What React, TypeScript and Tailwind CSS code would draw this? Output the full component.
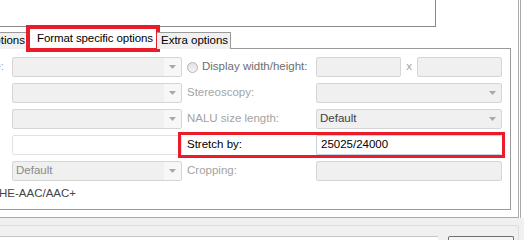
import { ReactNode } from "react";

function Arrow() {
    return (
        <svg width="7" height="4" viewBox="0 0 7 4" className="shrink-0">
            <path d="M0 0 H7 L3.5 4 Z" fill="#a8a8a8" />
        </svg>
    );
}

function Combo({ text = "", dark = false, split = false, width = "w-[170px]" }: { text?: string; dark?: boolean; split?: boolean; width?: string }) {
    return (
        <div className={`${width} h-[20px] flex border border-[#d6d6d6] rounded-[2px] bg-[#f0f0f0] overflow-hidden`}>
            <div className={`flex-1 flex items-center pl-[3px] ${dark ? "text-[#404040]" : "text-[#8a8a8a]"}`}>
                {text}
            </div>
            <div className={`w-[17px] flex items-center justify-center ${split ? "bg-[#f7f7f7]" : ""}`}>
                <Arrow />
            </div>
        </div>
    );
}

function Input({ value = "", disabled = false, width = "w-[186px]", border = "border-[#d6d6d6]" }: { value?: string; disabled?: boolean; width?: string; border?: string }) {
    return (
        <div className={`${width} h-[20px] flex items-center pl-[4px] border ${border} rounded-[2px] ${disabled ? "bg-[#f0f0f0]" : "bg-white"} text-black`}>
            {value}
        </div>
    );
}

function Row({ left, label, right }: { left: ReactNode; label: ReactNode; right: ReactNode }) {
    return (
        <div className="flex items-center h-[20px]">
            <div className="w-[12px]" />
            {left}
            <div className="w-[134px] pl-[5px] flex items-center whitespace-nowrap text-[#a3a3a3]">{label}</div>
            {right}
        </div>
    );
}

export default function App() {
    return (
        <div className="w-[524px] h-[240px] bg-white overflow-hidden text-[11.5px] leading-none" style={{ fontFamily: '"Liberation Sans", Arial, sans-serif' }}>
            <div className="w-[521px] h-[218px] border-r-[3px] border-double border-[#a9a9a9]">
                <div className="w-[519px] h-[218px] border-b border-[#a9a9a9]">
                    {/* preview box */}
                    <div className="w-[436px] h-[27px] border-r border-b border-[#8a8a8a]" />

                    {/* tabs */}
                    <div className="flex items-end h-[21px] mt-[1px] relative z-10">
                        <div className="w-[30px] h-[17px] flex justify-end overflow-hidden">
                            <div className="shrink-0 h-full flex items-center pl-[5px] pr-[4px] whitespace-nowrap bg-[#f0f0f0] border border-b-0 border-[#9a9a9a] text-black">
                                Video options
                            </div>
                        </div>
                        <div className="h-[21px] w-[128px] flex items-center pl-[7px] bg-white border border-b-0 border-[#9a9a9a] text-black whitespace-nowrap tracking-[-0.1px] outline-[4px] outline-solid outline-[#ea1c2a] outline-offset-[-1px] -ml-px">
                            Format specific options
                        </div>
                        <div className="h-[17px] w-[74px] flex items-center pl-[4px] bg-[#f0f0f0] border border-b-0 border-l-0 border-[#9a9a9a] text-black whitespace-nowrap">
                            Extra options
                        </div>
                    </div>

                    {/* panel */}
                    <div className="w-[511px] h-[162px] -mt-px border-t border-r border-b border-[#9a9a9a] pt-[8px] flex flex-col gap-[6px]">
                        <div className="flex items-center h-[20px]">
                            <div className="w-[12px] h-full flex items-center justify-end overflow-hidden">
                                <span className="whitespace-nowrap shrink-0 text-[#a3a3a3] pr-[8px]">Profile:</span>
                            </div>
                            <Combo split />
                            <div className="w-[134px] pl-[5px] flex items-center gap-[4px] whitespace-nowrap text-[#6e6e6e]">
                                <span className="w-[11px] h-[11px] rounded-full border border-[#b5b5b5] bg-gradient-to-b from-[#e2e2e2] to-[#f4f4f4]" />
                                Display width/height:
                            </div>
                            <Input disabled width="w-[85px]" />
                            <div className="w-[16px] text-center text-[#a3a3a3]">x</div>
                            <Input disabled width="w-[85px]" />
                        </div>
                        <Row left={<Combo split />} label="Stereoscopy:" right={<Combo width="w-[186px]" />} />
                        <Row left={<Combo split />} label="NALU size length:" right={<Combo width="w-[186px]" text="Default" dark />} />
                        <div className="flex items-center h-[20px]">
                            <div className="w-[12px]" />
                            <Input width="w-[170px]" border="border-[#e2e2e2]" />
                            <div className="flex items-center outline-[3px] outline-solid outline-[#ea1c2a] ml-[-1px]">
                                <div className="w-[135px] pl-[6px] whitespace-nowrap text-black">Stretch by:</div>
                                <Input value="25025/24000" border="border-[#c9d3de] border-r-0" />
                            </div>
                        </div>
                        <Row left={<Combo split text="Default" />} label="Cropping:" right={<Input disabled />} />
                        <div className="-ml-[1px] mt-[1px] text-[#454545] whitespace-nowrap h-[12px] flex items-center">HE-AAC/AAC+</div>
                    </div>
                </div>
            </div>

            {/* lower area */}
            <div className="h-[22px] bg-[#f0f0f0] pt-[7px]">
                <div className="w-[519px] h-[15px] border-t border-r border-[#dcdcdc] rounded-tr-[3px] bg-[#f0f0f0] flex items-end gap-[10px] pt-[11px]">
                    <div className="w-[438px] h-[4px] bg-white border-t border-[#c5c5c5]" />
                    <div className="w-[66px] h-[4px] bg-[#f4f4f4] border-t border-l border-r border-[#707070] rounded-t-[2px]" />
                </div>
            </div>
        </div>
    );
}
